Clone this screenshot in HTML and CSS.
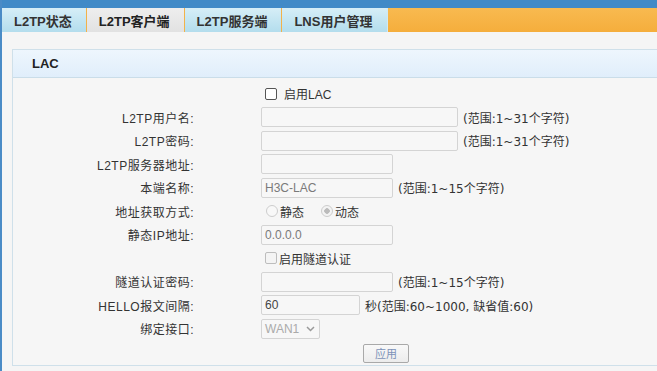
FILE: index.html
```html
<!DOCTYPE html>
<html lang="zh-CN">
<head>
    <meta charset="UTF-8">
    <title>L2TP客户端</title>
    <link rel="stylesheet" href="styles.css">
</head>
<body>
    <div class="topbar"></div>

    <div class="tabs">
        <a class="tab" href="#">L2TP状态</a>
        <a class="tab active" href="#">L2TP客户端</a>
        <a class="tab" href="#">L2TP服务端</a>
        <a class="tab" href="#">LNS用户管理</a>
        <div class="tab-fill"></div>
    </div>

    <div class="content">
        <div class="panel">
            <div class="panel-head">LAC</div>
            <div class="panel-body">
                <div class="row">
                    <div class="label"></div>
                    <div class="field">
                        <label class="check"><input type="checkbox"><span class="check-gap">启用LAC</span></label>
                    </div>
                </div>
                <div class="row">
                    <div class="label">L2TP用户名:</div>
                    <div class="field"><input class="txt wide" type="text" disabled><span class="hint">(范围:1~31个字符)</span></div>
                </div>
                <div class="row">
                    <div class="label">L2TP密码:</div>
                    <div class="field"><input class="txt wide" type="password" disabled><span class="hint">(范围:1~31个字符)</span></div>
                </div>
                <div class="row">
                    <div class="label">L2TP服务器地址:</div>
                    <div class="field"><input class="txt" type="text" disabled></div>
                </div>
                <div class="row">
                    <div class="label">本端名称:</div>
                    <div class="field"><input class="txt" type="text" value="H3C-LAC" disabled><span class="hint">(范围:1~15个字符)</span></div>
                </div>
                <div class="row">
                    <div class="label">地址获取方式:</div>
                    <div class="field">
                        <label class="radio"><input type="radio" name="mode" disabled>静态</label>
                        <label class="radio"><input type="radio" name="mode" checked disabled>动态</label>
                    </div>
                </div>
                <div class="row">
                    <div class="label">静态IP地址:</div>
                    <div class="field"><input class="txt" type="text" value="0.0.0.0" disabled></div>
                </div>
                <div class="row">
                    <div class="label"></div>
                    <div class="field">
                        <label class="check off"><input type="checkbox" disabled>启用隧道认证</label>
                    </div>
                </div>
                <div class="row">
                    <div class="label">隧道认证密码:</div>
                    <div class="field"><input class="txt" type="password" disabled><span class="hint">(范围:1~15个字符)</span></div>
                </div>
                <div class="row">
                    <div class="label">HELLO报文间隔:</div>
                    <div class="field"><input class="txt short dark" type="text" value="60" disabled><span class="hint">秒(范围:60~1000, 缺省值:60)</span></div>
                </div>
                <div class="row">
                    <div class="label">绑定接口:</div>
                    <div class="field">
                        <div class="select">WAN1
                            <svg width="9" height="6" viewBox="0 0 9 6"><path d="M1 1 L4.5 4.5 L8 1" fill="none" stroke="#9a9a9a" stroke-width="1.5"/></svg>
                        </div>
                    </div>
                </div>
                <div class="btn-row">
                    <button class="btn" type="button">应用</button>
                </div>
            </div>
        </div>
    </div>
</body>
</html>
```

FILE: styles.css
```css
html, body {
    margin: 0;
    padding: 0;
    height: 100%;
}

body {
    font-family: 'Liberation Sans', 'Noto Sans CJK SC', sans-serif;
    font-size: 12px;
    color: #333;
    background-color: #f5f5f5;
    border-left: 2px solid #4a8bc6;
    overflow: hidden;
}

.topbar {
    height: 8px;
    background-color: #418ac7;
}

.tabs {
    display: flex;
    height: 24px;
}

.tab {
    display: flex;
    align-items: center;
    padding: 0 14px 0 12px;
    font-size: 13px;
    font-weight: bold;
    color: #333;
    text-decoration: none;
    background: linear-gradient(#d6eef7, #b3dded);
    border-left: 1px solid #f2b24a;
}

.tab:first-child {
    border-left: none;
}

.tab:last-of-type {
    padding-right: 15px;
}

.tab.active {
    background: linear-gradient(#eeeeee, #e2e2e2);
    color: #222;
}

.tab-fill {
    flex: 1;
    background: linear-gradient(#f8ba50, #f5ae3c);
    border-left: 1px solid #cfeaf5;
}

.content {
    padding: 17px 0 0 10px;
}

.panel {
    width: 700px;
    border: 1px solid #cfe0ea;
    background-color: #f6f6f6;
}

.panel-head {
    height: 27px;
    line-height: 27px;
    padding-left: 19px;
    font-size: 13px;
    font-weight: bold;
    color: #222;
    background: linear-gradient(#eef6fd, #e0eefb);
    border-bottom: 1px solid #cadde9;
}

.panel-body {
    padding: 4px 0 1px 0;
}

.row {
    display: grid;
    grid-template-columns: 181px 1fr;
    column-gap: 67px;
    align-items: center;
    height: 23.5px;
}

.label {
    text-align: right;
    white-space: nowrap;
    letter-spacing: 0.5px;
}

.field {
    display: flex;
    align-items: center;
    white-space: nowrap;
}

.txt {
    box-sizing: border-box;
    width: 132px;
    height: 20px;
    margin: 0;
    padding: 0 3px;
    font-family: 'Liberation Sans', 'Noto Sans CJK SC', sans-serif;
    font-size: 12px;
    color: #7a7a7a;
    background-color: #f7f7f7;
    border: 1px solid #d4d4d4;
    border-radius: 2px;
}

.txt.wide {
    width: 197px;
}

.txt.short {
    width: 99px;
}

.txt.dark {
    color: #444;
}

.hint {
    margin-left: 5px;
    font-family: 'DejaVu Sans', 'Noto Sans CJK SC', sans-serif;
}

.check, .radio {
    display: flex;
    align-items: center;
}

.check input {
    appearance: none;
    box-sizing: border-box;
    width: 12px;
    height: 12px;
    margin: 0 0 0 4px;
    background: #fff;
    border: 1px solid #555;
    border-radius: 2px;
}

.check-gap {
    margin-left: 7px;
}

.check.off input {
    border-color: #bdbdbd;
    background: #f4f4f4;
    margin-right: 2px;
}

.radio input {
    appearance: none;
    box-sizing: border-box;
    width: 12px;
    height: 12px;
    margin: 0 2px 0 5px;
    border: 1px solid #cdcdcd;
    border-radius: 50%;
    background: #f8f8f8;
}

.radio + .radio input {
    margin-left: 17px;
}

.radio input:checked {
    background: radial-gradient(circle, #bbbbbb 0 2.5px, #f3f3f3 3px);
}

.select {
    box-sizing: border-box;
    display: flex;
    align-items: center;
    justify-content: space-between;
    width: 59px;
    height: 20px;
    padding: 0 4px 0 3px;
    color: #aaa;
    background: #f7f7f7;
    border: 1px solid #d4d4d4;
    border-radius: 2px;
}

.btn-row {
    padding: 3px 0 1px 350px;
}

.btn {
    width: 46px;
    height: 19px;
    padding: 0;
    font-family: 'Noto Sans CJK SC', sans-serif;
    font-size: 11px;
    color: #7c92b8;
    background: linear-gradient(#f9f9f9, #ececec);
    border: 1px solid #a9a9a9;
    border-radius: 2px;
}
```
